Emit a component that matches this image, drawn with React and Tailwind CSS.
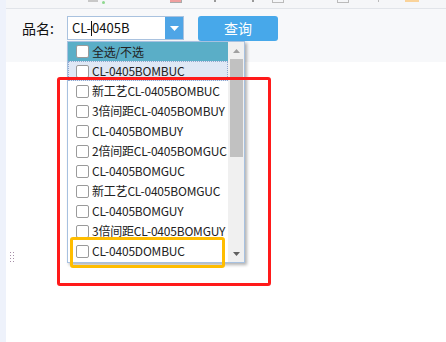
import React from "react";

const items = [
  "CL-0405BOMBUC",
  "新工艺CL-0405BOMBUC",
  "3倍间距CL-0405BOMBUY",
  "CL-0405BOMBUY",
  "2倍间距CL-0405BOMGUC",
  "CL-0405BOMGUC",
  "新工艺CL-0405BOMGUC",
  "CL-0405BOMGUY",
  "3倍间距CL-0405BOMGUY",
  "CL-0405DOMBUC",
];

function Box() {
  return <span className="w-[13px] h-[13px] shrink-0 bg-white border border-[#9a9a9a] rounded-[2px]" />;
}

export default function App() {
  const font = { fontFamily: '"Noto Sans CJK SC", "Noto Sans", sans-serif' };
  return (
    <div className="w-[446px] h-[342px] relative overflow-hidden bg-white flex text-[#222]" style={font}>
      <div className="w-[6px] h-full bg-[#eef2fb] shrink-0" />
      <div className="flex-1 flex flex-col">
        <div className="h-[9px] bg-[#f5f6f8] border-b border-[#e1e4e9] relative shrink-0">
          <span className="absolute left-[82px] top-0 w-[10px] h-[2px] bg-[#c8c8c8]" />
          <span className="absolute left-[96px] top-[1px] w-[3px] h-[3px] bg-[#8fd88f] rounded-full" />
          <span className="absolute left-[164px] top-0 w-[12px] h-[3px] border-b border-r border-[#aaa] bg-[#f0a0a0]" />
          <span className="absolute left-[208px] top-0 w-[2px] h-[2px] bg-[#999]" />
          <span className="absolute left-[246px] top-0 w-[2px] h-[2px] bg-[#999]" />
          <span className="absolute left-[266px] top-0 w-[12px] h-[3px] border-b border-x border-[#bbb]" />
          <span className="absolute left-[331px] top-0 w-[12px] h-[3px] border-b border-x border-[#bbb]" />
          <span className="absolute left-[372px] top-0 w-[1px] h-[2px] bg-[#bbb]" />
          <span className="absolute left-[399px] top-0 w-[14px] h-[2px] bg-[#fad39a]" />
        </div>
        <div className="h-[53px] bg-[#f7f8fa] shrink-0 flex items-start pt-[7px]">
          <span className="ml-[16px] w-[45px] h-[24px] flex items-center text-[14px] text-[#111]">品名:</span>
          <div className="flex h-[24px] w-[117px] border border-[#a9c2df] bg-white">
            <div className="flex-1 flex items-center pl-[4px] text-[13px] text-[#111]">
              CL-<span className="inline-block w-[1px] h-[15px] bg-[#111]" />0405B
            </div>
            <div className="w-[18px] h-full bg-[#4ea5e6] flex items-center justify-center">
              <svg width="9" height="5" viewBox="0 0 9 5"><path d="M0 0h9L4.5 5z" fill="#fff" /></svg>
            </div>
          </div>
          <button className="ml-[14px] w-[80px] h-[25px] bg-[#47a8ea] rounded-[3px] text-white text-[14px] flex items-center justify-center">查询</button>
        </div>
        <div className="flex-1 bg-white" />
      </div>

      {/* dropdown panel */}
      <div className="absolute left-[67px] top-[41px] w-[178px] h-[222px] border border-[#a7c1e0] bg-white flex shadow-[2px_2px_3px_rgba(0,0,0,0.3)]">
        <div className="flex-1 flex flex-col text-[12px] tracking-[-0.2px]">
          <div className="h-[19px] bg-[#5aaec7] flex items-center pl-[8px] gap-[3px]">
            <Box />
            <span className="text-[#222]">全选/不选</span>
          </div>
          {items.map((t, i) => (
            <div
              key={t}
              className={
                i === 0
                  ? "h-[20px] bg-[#dfe8f5] border border-dotted border-[#8fa8d0] flex items-center pl-[7px] gap-[3px]"
                  : "h-[20px] flex items-center pl-[8px] gap-[3px]"
              }
            >
              <Box />
              <span className="whitespace-nowrap">{t}</span>
            </div>
          ))}
        </div>
        <div className="w-[16px] h-full bg-[#f0f0f0] flex flex-col items-center">
          <div className="h-[17px] flex items-center justify-center">
            <svg width="7" height="4" viewBox="0 0 7 4"><path d="M3.5 0L7 4H0z" fill="#a0a0a0" /></svg>
          </div>
          <div className="w-[13px] h-[98px] bg-[#c1c1c1]" />
          <div className="flex-1" />
          <div className="h-[17px] flex items-center justify-center">
            <svg width="7" height="4" viewBox="0 0 7 4"><path d="M0 0h7L3.5 4z" fill="#606060" /></svg>
          </div>
        </div>
      </div>

      {/* annotations */}
      <div className="absolute left-[57px] top-[77px] w-[214px] h-[209px] border-[3px] border-[#ff1a1a] rounded-[3px]" />
      <div className="absolute left-[70px] top-[237px] w-[155px] h-[31px] border-[3px] border-[#ffbd00] rounded-[3px]" />

      {/* grip dots */}
      <div className="absolute left-[10px] top-[252px] grid grid-cols-2 gap-x-[2px] gap-y-[2px]">
        {Array.from({ length: 8 }).map((_, i) => (
          <span key={i} className="w-[1px] h-[1px] bg-[#a68ea8]" />
        ))}
      </div>
    </div>
  );
}
